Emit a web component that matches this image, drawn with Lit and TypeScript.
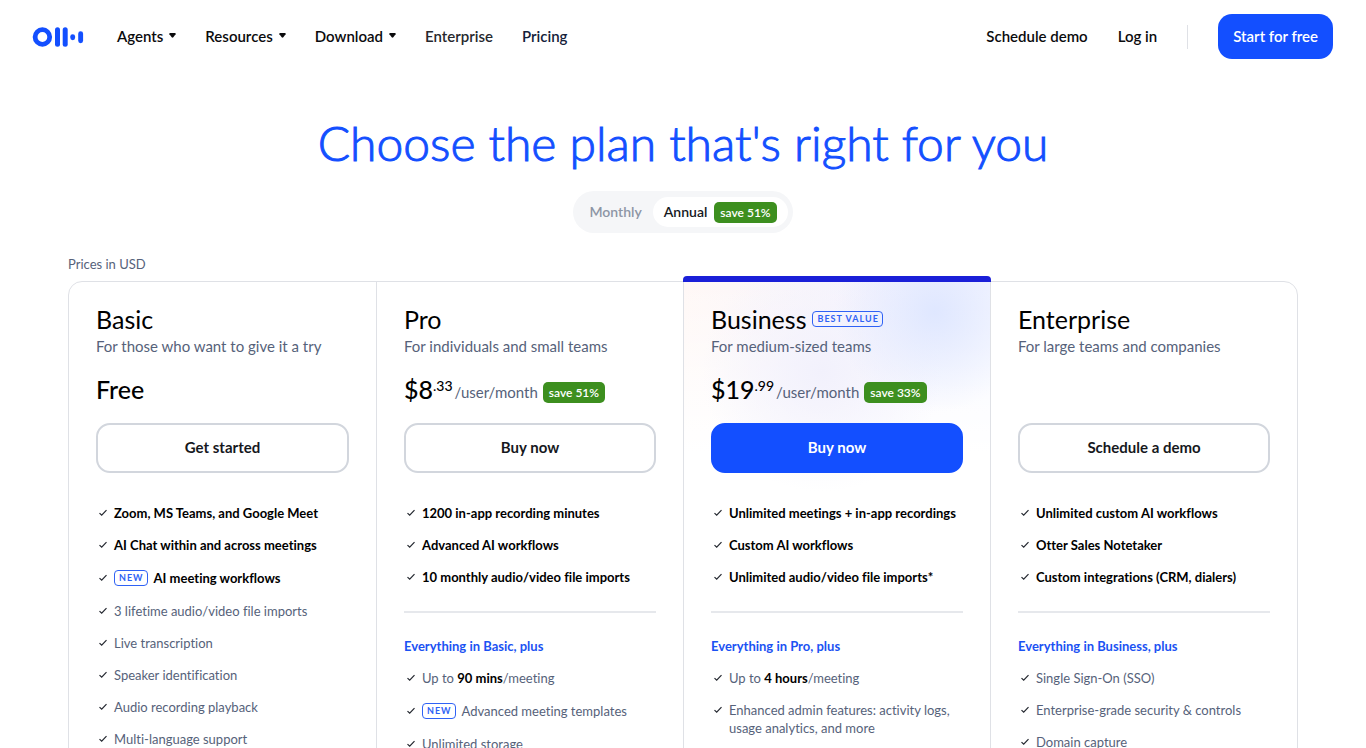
import { LitElement, html, css, nothing, TemplateResult } from "lit";
import { customElement, property, state } from "lit/decorators.js";
import { classMap } from "lit/directives/class-map.js";

interface Feature {
  text: string | TemplateResult;
  isNew?: boolean;
}

interface Plan {
  name: string;
  audience: string;
  price?: string;
  cents?: string;
  save?: string;
  action: string;
  best?: boolean;
  highlights: string[];
  newHighlight?: string;
  plusTitle?: string;
  features: Feature[];
}

const plans: Plan[] = [
  {
    name: "Basic",
    audience: "For those who want to give it a try",
    price: "Free",
    action: "Get started",
    highlights: ["Zoom, MS Teams, and Google Meet", "AI Chat within and across meetings"],
    newHighlight: "AI meeting workflows",
    features: [
      { text: "3 lifetime audio/video file imports" },
      { text: "Live transcription" },
      { text: "Speaker identification" },
      { text: "Audio recording playback" },
      { text: "Multi-language support" },
    ],
  },
  {
    name: "Pro",
    audience: "For individuals and small teams",
    price: "$8",
    cents: ".33",
    save: "save 51%",
    action: "Buy now",
    highlights: ["1200 in-app recording minutes", "Advanced AI workflows", "10 monthly audio/video file imports"],
    plusTitle: "Everything in Basic, plus",
    features: [
      { text: html`Up to <b>90 mins</b>/meeting` },
      { text: "Advanced meeting templates", isNew: true },
      { text: "Unlimited storage" },
    ],
  },
  {
    name: "Business",
    audience: "For medium-sized teams",
    price: "$19",
    cents: ".99",
    save: "save 33%",
    action: "Buy now",
    best: true,
    highlights: ["Unlimited meetings + in-app recordings", "Custom AI workflows", "Unlimited audio/video file imports*"],
    plusTitle: "Everything in Pro, plus",
    features: [
      { text: html`Up to <b>4 hours</b>/meeting` },
      { text: "Enhanced admin features: activity logs, usage analytics, and more" },
    ],
  },
  {
    name: "Enterprise",
    audience: "For large teams and companies",
    action: "Schedule a demo",
    highlights: ["Unlimited custom AI workflows", "Otter Sales Notetaker", "Custom integrations (CRM, dialers)"],
    plusTitle: "Everything in Business, plus",
    features: [
      { text: "Single Sign-On (SSO)" },
      { text: "Enterprise-grade security & controls" },
      { text: "Domain capture" },
    ],
  },
];

@customElement("site-header")
export class SiteHeader extends LitElement {
  static styles = css`
    :host {
      display: block;
    }
    .bar {
      display: flex;
      align-items: center;
      justify-content: space-between;
      padding: 14px 33px 14px 32px;
      font-size: 15px;
      line-height: 20px;
      font-weight: 600;
    }
    .group {
      display: flex;
      align-items: center;
      gap: 29px;
    }
    .account {
      gap: 30px;
    }
    a,
    .menu {
      padding: 0 0 2px;
      color: #0b0b0d;
      text-decoration: none;
    }
    .menu {
      display: flex;
      align-items: center;
      gap: 6px;
      border: 0;
      background: none;
      font: inherit;
      cursor: pointer;
    }
    .logo {
      display: flex;
      margin-right: 4px;
      padding: 0;
    }
    .soft {
      color: #26282d;
    }
    .current {
      color: #14213a;
    }
    .rule {
      width: 1px;
      height: 24px;
      background: #dfe1e6;
    }
    .cta {
      padding: 12px 15px 13px;
      border-radius: 14px;
      background: #134fff;
      color: #fff;
    }
  `;

  private menu(label: string) {
    return html`<button class="menu" type="button" aria-haspopup="true">
      ${label}
      <svg width="7" height="5" viewBox="0 0 7 5" aria-hidden="true">
        <path d="M.9 0h5.200q.9 .3.5 1.200L4.300 4.300Q3.500 5 2.700 4.300L.4 1.200Q0 .3.9 0z" fill="#0b0b0d" />
      </svg>
    </button>`;
  }

  render() {
    return html`<header class="bar">
      <nav class="group" aria-label="Main">
        <a class="logo" href="#" aria-label="Home">
          <svg width="52" height="20" viewBox="0 0 52 20" fill="#134fff">
            <circle cx="10.400" cy="10" r="7.300" fill="none" stroke="#134fff" stroke-width="4.800" />
            <rect x="23" y="0.300" width="5" height="19.400" rx="2.500" />
            <rect x="30.700" y="0.300" width="5" height="19.400" rx="2.500" />
            <rect x="38.300" y="7.200" width="4.800" height="6" rx="2.400" />
            <rect x="46.200" y="4.200" width="4.900" height="12" rx="2.450" />
          </svg>
        </a>
        ${["Agents", "Resources", "Download"].map((l) => this.menu(l))}
        <a class="soft" href="#">Enterprise</a>
        <a class="current" href="#" aria-current="page">Pricing</a>
      </nav>
      <div class="group account">
        <a href="#">Schedule demo</a>
        <a href="#">Log in</a>
        <span class="rule"></span>
        <a class="cta" href="#">Start for free</a>
      </div>
    </header>`;
  }
}

@customElement("billing-toggle")
export class BillingToggle extends LitElement {
  @state() private period = "annual";

  static styles = css`
    :host {
      display: flex;
      justify-content: center;
    }
    .track {
      display: flex;
      margin: 0;
      padding: 6px 5px;
      border: 0;
      border-radius: 21px;
      background: #f5f6f8;
      font-size: 14px;
      line-height: 20px;
      font-weight: 600;
    }
    .option {
      position: relative;
      display: flex;
      align-items: center;
      gap: 7px;
      height: 30px;
      padding: 0 11px;
      border-radius: 15px;
      color: #8d95a5;
      cursor: pointer;
    }
    .on {
      background: #fff;
      color: #16181d;
    }
    input {
      position: absolute;
      inset: 0;
      margin: 0;
      opacity: 0;
      cursor: pointer;
    }
    .save {
      padding: 0 6px;
      border-radius: 5px;
      background: #3d8f1f;
      color: #fff;
      font-size: 12px;
      line-height: 21px;
    }
  `;

  private option(id: string, content: unknown) {
    return html`<label class=${classMap({ option: true, on: this.period === id })}>
      <input type="radio" name="period" .checked=${this.period === id} @change=${() => (this.period = id)} />
      ${content}
    </label>`;
  }

  render() {
    return html`<fieldset class="track" aria-label="Billing period">
      ${this.option("monthly", "Monthly")}
      ${this.option("annual", html`Annual <span class="save">save 51%</span>`)}
    </fieldset>`;
  }
}

@customElement("plan-column")
export class PlanColumn extends LitElement {
  @property({ attribute: false }) plan!: Plan;

  static styles = css`
    :host {
      display: block;
      min-width: 0;
    }
    .plan {
      padding: 22px 27px 40px;
    }
    .top {
      display: flex;
      align-items: center;
      gap: 6px;
    }
    h2 {
      margin: 0;
      font-size: 25px;
      line-height: 30px;
      font-weight: 400;
      color: #000;
    }
    .tag {
      padding: 0 3px 0 4px;
      border: 1px solid #2f62f5;
      border-radius: 4px;
      color: #2f62f5;
      font-size: 9px;
      line-height: 14px;
      font-weight: 700;
      letter-spacing: 1px;
    }
    .audience {
      margin: 2px 0 18px;
      font-size: 15px;
      line-height: 20px;
      color: #56627a;
    }
    .price {
      display: flex;
      align-items: center;
      height: 30px;
      font-size: 25px;
      line-height: 30px;
      font-weight: 500;
      color: #000;
    }
    .cents {
      align-self: flex-start;
      font-size: 14px;
      line-height: 24px;
      font-weight: 500;
    }
    .unit {
      margin: 6px 5px 0 2px;
      font-size: 15px;
      line-height: 20px;
      font-weight: 400;
      color: #56627a;
    }
    .save {
      margin-top: 6px;
      padding: 0 6px;
      border-radius: 5px;
      background: #3d8f1f;
      color: #fff;
      font-size: 12px;
      line-height: 21px;
      font-weight: 600;
    }
    .action {
      width: 100%;
      height: 50px;
      margin: 19px 0 31px;
      padding: 0 0 2px;
      border: 2px solid #d2d6dd;
      border-radius: 14px;
      background: #fff;
      color: #16181d;
      font: inherit;
      font-size: 15px;
      font-weight: 700;
      cursor: pointer;
    }
    .solid {
      border-color: #134fff;
      background: #134fff;
      color: #fff;
    }
    ul {
      display: grid;
      gap: 14px;
      margin: 0;
      padding: 0;
      list-style: none;
      font-size: 13px;
      line-height: 18px;
      color: #56627a;
    }
    li {
      display: flex;
    }
    .check {
      flex: none;
      width: 8px;
      height: 8px;
      margin: 5px 7px 0 3px;
    }
    .badged {
      align-items: center;
      min-height: 20px;
    }
    .badged .check {
      margin-top: 0;
    }
    .badged .tag {
      margin-right: 6px;
    }
    .strong,
    b {
      color: #000;
      font-weight: 700;
    }
    .rule {
      height: 2px;
      margin: 25px 0 24px;
      border: 0;
      background: #e6e8ec;
    }
    h3 {
      margin: 0 0 14px;
      font-size: 13px;
      line-height: 18px;
      font-weight: 700;
      color: #1b52f3;
    }
    ul + ul {
      margin-top: 14px;
    }
  `;

  private item(text: unknown, strong = false, isNew = false) {
    return html`<li class=${classMap({ strong, badged: isNew })}>
      <svg class="check" viewBox="0 0 8 8" fill="none" stroke="#23272f" stroke-width="1.200" aria-hidden="true">
        <path d="M.5 4.100L2.700 6.200L7.500 1.200" />
      </svg>
      ${isNew ? html`<span class="tag">NEW</span>` : nothing}
      <span>${text}</span>
    </li>`;
  }

  render() {
    const p = this.plan;
    return html`<section class="plan">
      <div class="top">
        <h2>${p.name}</h2>
        ${p.best ? html`<span class="tag">BEST VALUE</span>` : nothing}
      </div>
      <p class="audience">${p.audience}</p>
      <div class="price">
        ${p.price ? html`<span>${p.price}</span>` : nothing}
        ${p.cents
          ? html`<span class="cents">${p.cents}</span><span class="unit">/user/month</span
              ><span class="save">${p.save}</span>`
          : nothing}
      </div>
      <button type="button" class=${classMap({ action: true, solid: !!p.best })}>${p.action}</button>
      <ul>
        ${p.highlights.map((t) => this.item(t, true))}
        ${p.newHighlight ? this.item(p.newHighlight, true, true) : nothing}
      </ul>
      ${p.plusTitle
        ? html`<hr class="rule" />
            <h3>${p.plusTitle}</h3>`
        : nothing}
      <ul>
        ${p.features.map((f) => this.item(f.text, false, !!f.isNew))}
      </ul>
    </section>`;
  }
}

@customElement("app-root")
export class AppRoot extends LitElement {
  static styles = css`
    :host {
      display: block;
      background: #fff;
      font-family: Lato, "Liberation Sans", sans-serif;
      font-variant-ligatures: none;
      color: #16181d;
    }
    main {
      padding: 40px 68px;
    }
    h1 {
      margin: 0 0 18px;
      font-size: 48px;
      line-height: 60px;
      font-weight: 300;
      text-align: center;
      color: #134fff;
      -webkit-text-stroke: 1px #134fff;
    }
    .note {
      margin: 22px 0 8px;
      font-size: 13px;
      line-height: 18px;
      color: #56627a;
    }
    .plans {
      display: grid;
      grid-template-columns: repeat(4, minmax(0, 1fr));
      border: 1px solid #dfe1e6;
      border-radius: 14px;
    }
    plan-column + plan-column {
      border-left: 1px solid #dfe1e6;
    }
    .featured {
      position: relative;
      background:
        radial-gradient(circle at 82% 30px, #dfe7ff 0, #dfe7ff00 100px),
        radial-gradient(circle at 45% 90px, #f2f1fc 0, #f2f1fc00 120px),
        linear-gradient(180deg, #ffffff00 0, #fff 170px),
        linear-gradient(90deg, #fff8f6 0, #f6f4fe 60%, #f6f7ff 100%);
    }
    .featured::before {
      content: "";
      position: absolute;
      top: -6px;
      left: -1px;
      right: -1px;
      height: 6px;
      border-radius: 4px 4px 0 0;
      background: #1a1fd8;
    }
  `;

  render() {
    return html`<site-header></site-header>
      <main>
        <h1>Choose the plan that's right for you</h1>
        <billing-toggle></billing-toggle>
        <p class="note">Prices in USD</p>
        <div class="plans">
          ${plans.map((p) => html`<plan-column class=${classMap({ featured: !!p.best })} .plan=${p}></plan-column>`)}
        </div>
      </main>`;
  }
}
